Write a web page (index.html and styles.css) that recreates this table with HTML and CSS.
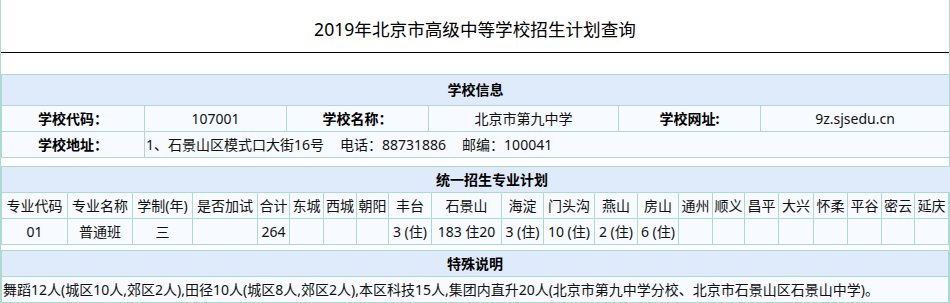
FILE: index.html
```html
<!DOCTYPE html>
<html lang="zh-CN">
<head>
<meta charset="utf-8">
<title>2019年北京市高级中等学校招生计划查询</title>
<link rel="stylesheet" href="styles.css">
</head>
<body>
<div class="page">
  <div class="title">2019年北京市高级中等学校招生计划查询</div>

  <table class="grid info">
    <colgroup><col><col><col><col><col><col></colgroup>
    <tr class="head"><td colspan="6">学校信息</td></tr>
    <tr>
      <td class="label">学校代码：</td>
      <td>107001</td>
      <td class="label">学校名称：</td>
      <td>北京市第九中学</td>
      <td class="label">学校网址:</td>
      <td>9z.sjsedu.cn</td>
    </tr>
    <tr>
      <td class="label">学校地址：</td>
      <td colspan="5" class="left">1、石景山区模式口大街16号<span class="sep">电话：88731886</span><span class="sep">邮编：100041</span></td>
    </tr>
  </table>

  <table class="grid plan">
    <colgroup>
      <col><col><col><col><col><col><col><col><col><col><col><col>
      <col><col><col><col><col><col><col><col><col><col><col>
    </colgroup>
    <tr class="head"><td colspan="23">统一招生专业计划</td></tr>
    <tr>
      <td>专业代码</td><td>专业名称</td><td>学制(年)</td><td>是否加试</td><td>合计</td>
      <td>东城</td><td>西城</td><td>朝阳</td><td>丰台</td><td>石景山</td><td>海淀</td>
      <td>门头沟</td><td>燕山</td><td>房山</td><td>通州</td><td>顺义</td><td>昌平</td>
      <td>大兴</td><td>怀柔</td><td>平谷</td><td>密云</td><td>延庆</td>
    </tr>
    <tr>
      <td>01</td><td>普通班</td><td>三</td><td></td><td>264</td>
      <td></td><td></td><td></td><td>3 (住)</td><td>183 住20</td><td>3 (住)</td>
      <td>10 (住)</td><td>2 (住)</td><td>6 (住)</td><td></td><td></td><td></td>
      <td></td><td></td><td></td><td></td><td></td>
    </tr>
  </table>

  <table class="grid note">
    <tr class="head"><td>特殊说明</td></tr>
    <tr><td class="left">舞蹈12人(城区10人,郊区2人),田径10人(城区8人,郊区2人),本区科技15人,集团内直升20人(北京市第九中学分校、北京市石景山区石景山中学)。</td></tr>
  </table>
</div>
</body>
</html>
```

FILE: styles.css
```css
html, body {
  margin: 0;
  padding: 0;
  background: #fff;
}

body {
  font-family: "Noto Sans", "Noto Sans CJK SC", sans-serif;
  font-size: 14px;
  color: #111;
}

.page {
  box-sizing: border-box;
  width: 950px;
  min-height: 303px;
  border-left: 1px solid #acd9d1;
  border-right: 1px solid #acd9d1;
}

.title {
  box-sizing: border-box;
  height: 53px;
  padding-top: 6px;
  line-height: 46px;
  text-align: center;
  font-size: 17.6px;
  color: #000;
  border-bottom: 1px solid #000;
}

.grid {
  width: 100%;
  border-collapse: collapse;
  table-layout: fixed;
  border: 1px solid #acd9d1;
}

.grid td {
  border: 1px solid #acd9d1;
  background: #f7fbff;
  padding: 0;
  height: 25px;
  line-height: 20px;
  text-align: center;
  vertical-align: middle;
  white-space: nowrap;
  overflow: hidden;
}

.grid .head td {
  background: #dfebfa;
  font-weight: bold;
  color: #000;
}

.grid td.label {
  font-weight: bold;
  color: #000;
}

.grid td.left {
  text-align: left;
  padding-left: 1px;
}

.sep {
  margin-left: 16px;
}

.info {
  margin-top: 21px;
}

.info .head td {
  height: 30px;
}

.info col:nth-child(1) { width: 143px; }
.info col:nth-child(2) { width: 142px; }
.info col:nth-child(3) { width: 142px; }
.info col:nth-child(4) { width: 190px; }
.info col:nth-child(5) { width: 142px; }
.info col:nth-child(6) { width: 189px; }

.plan {
  margin-top: 8px;
}

.plan col:nth-child(1) { width: 66px; }
.plan col:nth-child(2) { width: 65px; }
.plan col:nth-child(3) { width: 60px; }
.plan col:nth-child(4) { width: 65px; }
.plan col:nth-child(5) { width: 32px; }
.plan col:nth-child(6) { width: 34px; }
.plan col:nth-child(7) { width: 33px; }
.plan col:nth-child(8) { width: 32px; }
.plan col:nth-child(9) { width: 43px; }
.plan col:nth-child(10) { width: 70px; }
.plan col:nth-child(11) { width: 42px; }
.plan col:nth-child(12) { width: 51px; }
.plan col:nth-child(13) { width: 43px; }
.plan col:nth-child(14) { width: 41px; }
.plan col:nth-child(15) { width: 34px; }
.plan col:nth-child(16) { width: 32px; }
.plan col:nth-child(17) { width: 34px; }
.plan col:nth-child(18) { width: 35px; }
.plan col:nth-child(19) { width: 34px; }
.plan col:nth-child(20) { width: 34px; }
.plan col:nth-child(21) { width: 33px; }
.plan col:nth-child(22) { width: 34px; }
.plan col:nth-child(23) { width: 34px; }

.note {
  margin-top: 5px;
}
```
